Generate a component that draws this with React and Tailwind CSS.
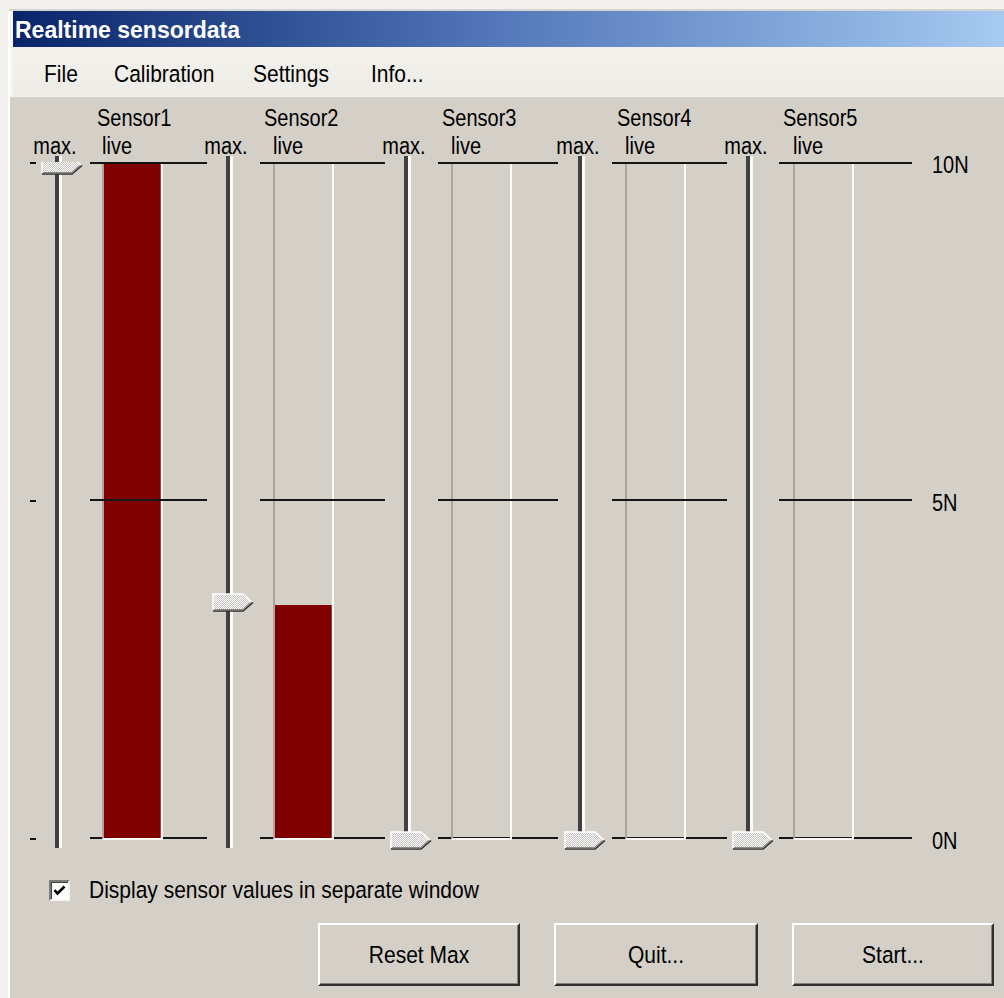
import React, { Fragment, useId } from 'react';

// live reading and stored maximum per channel, in newton (scale 0..10N)
const SENSORS = [
  { name: 'Sensor1', live: 10, max: 10, col: 'w-[131px]', line: 'left-[12px] w-[117px]', label: 'pl-[19px]' },
  { name: 'Sensor2', live: 3.45, max: 3.53, col: 'w-[138px]', line: 'left-[11px] w-[125px]', label: 'pl-[15px]' },
  { name: 'Sensor3', live: 0, max: 0, col: 'w-[134px]', line: 'left-[11px] w-[120px]', label: 'pl-[15px]' },
  { name: 'Sensor4', live: 0, max: 0, col: 'w-[128px]', line: 'left-[11px] w-[115px]', label: 'pl-[16px]' },
  { name: 'Sensor5', live: 0, max: 0, col: 'w-[143px]', line: 'left-[10px] w-[133px]', label: 'pl-[14px]' },
];

const FULL_SCALE = 10;
const PLOT_H = 675;

const Txt = ({ children, className = '' }) => (
  <span className={`inline-block scale-y-[1.15] ${className}`}>{children}</span>
);

const Thumb = ({ top }) => {
  const id = useId();
  return (
    <svg className="absolute left-[3px]" style={{ top }} width="43" height="19" viewBox="0 0 43 19">
      <defs>
        <pattern id={id} width="2" height="2" patternUnits="userSpaceOnUse">
          <rect width="2" height="2" fill="#ffffff" />
          <rect width="1" height="1" fill="#c6c4c0" />
          <rect x="1" y="1" width="1" height="1" fill="#c6c4c0" />
        </pattern>
      </defs>
      <path d="M1 1 H31 L41 9.5 L31 18 H1 Z" fill={`url(#${id})`} />
      <path d="M1 17 V1 H31 L39.5 8.5" fill="none" stroke="#ffffff" strokeWidth="1.5" />
      <path d="M1 18 H31 L41 9.5" fill="none" stroke="#303030" strokeWidth="1.6" />
      <path d="M2 16.6 H30.4 L38.8 9.5" fill="none" stroke="#8a8884" strokeWidth="1.2" />
    </svg>
  );
};

const SliderColumn = ({ max }) => {
  const center = 1 + (1 - max / FULL_SCALE) * PLOT_H;
  return (
    <div className="w-[40px] flex flex-col">
      <div className="h-[35px]" />
      <div className="h-[30px] pt-[3px] leading-[22px] flex justify-center pr-[6px]">
        <Txt>max.</Txt>
      </div>
      <div className="relative z-10 h-[678px]">
        <div className="absolute -top-[6px] -bottom-[8px] left-[17px] w-[4px] bg-[#404040]" />
        <div className="absolute -top-[6px] -bottom-[8px] left-[21px] w-[3px] bg-[#fbfaf7]" />
        <div className="absolute top-0 -bottom-[14px] left-0 -right-[8px] overflow-hidden">
          <Thumb top={center - 7} />
        </div>
      </div>
    </div>
  );
};

const GraphColumn = ({ s }) => (
  <div className={`${s.col} flex flex-col`}>
    <div className={`h-[35px] pt-[10px] leading-[22px] ${s.label}`}>
      <Txt>{s.name}</Txt>
    </div>
    <div className="h-[30px] pt-[3px] leading-[22px] pl-[24px]">
      <Txt>live</Txt>
    </div>
    <div className="relative h-[678px]">
      <div className={`absolute top-[675px] h-[2px] bg-[#151515] ${s.line}`} />
      <div className="absolute top-[1px] bottom-0 left-[24px] w-[61px] border-l-2 border-l-[#a9a59d] border-r-2 border-r-[#fbfaf7] border-b-2 border-b-[#fbfaf7] flex flex-col justify-end">
        <div className="w-full bg-[#800000] border-r border-r-[#a83a3a]" style={{ height: `${(s.live / FULL_SCALE) * 100}%` }} />
      </div>
      <div className={`absolute top-0 h-[2px] bg-[#151515] ${s.line}`} />
      <div className={`absolute top-[337px] h-[2px] bg-[#151515] ${s.line}`} />
    </div>
  </div>
);

const WinButton = ({ children, className = '' }) => (
  <button className={`h-[63px] bg-[#d4d0c8] border-2 border-t-white border-l-white border-r-[#303030] border-b-[#303030] shadow-[inset_-1px_-1px_0_#85827c] text-[21px] text-black ${className}`}>
    <Txt>{children}</Txt>
  </button>
);

export default function App() {
  return (
    <div className="w-[1004px] h-[998px] bg-[#f2f1ee] pt-[9px] pl-[8px] overflow-hidden font-['Liberation_Sans',Arial,sans-serif] text-black">
      <div className="h-full flex flex-col border-t-2 border-t-[#d6d4cf] border-l-2 border-l-white">
        <div className="pl-[3px] bg-[#f7f6f3]">
          <div className="h-[36px] bg-linear-to-r from-[#0a246a] via-[#5679bb] to-[#a6caf0] flex items-center pl-[2px]">
            <span className="text-white font-bold text-[23px] leading-none scale-y-[1.08] inline-block">Realtime sensordata</span>
          </div>
          <div className="h-[50px] bg-linear-to-b from-[#f3f1ec] to-[#eeece6] flex items-center pl-[31px] pt-[4px] text-[21px] leading-[24px]">
            <div className="w-[70px]"><Txt>File</Txt></div>
            <div className="w-[139px]"><Txt>Calibration</Txt></div>
            <div className="w-[118px]"><Txt>Settings</Txt></div>
            <div><Txt>Info...</Txt></div>
          </div>
        </div>

        <div className="flex-1 bg-[#d4d0c8] text-[20px]">
          <div className="flex pl-[20px]">
            <div className="w-[8px] flex flex-col">
              <div className="h-[65px]" />
              <div className="h-[678px] flex flex-col justify-between">
                <div className="w-[6px] h-[2px] bg-[#151515]" />
                <div className="w-[6px] h-[2px] bg-[#151515]" />
                <div className="w-[6px] h-[2px] bg-[#151515]" />
              </div>
            </div>

            {SENSORS.map((s) => (
              <Fragment key={s.name}>
                <SliderColumn max={s.max} />
                <GraphColumn s={s} />
              </Fragment>
            ))}

            <div className="flex flex-col pl-[20px]">
              <div className="h-[65px]" />
              <div className="h-[700px] -mt-[9px] -mb-[13px] flex flex-col justify-between leading-[24px]">
                <Txt>10N</Txt>
                <Txt>5N</Txt>
                <Txt>0N</Txt>
              </div>
            </div>
          </div>

          <div className="mt-[38px] h-[24px] flex items-center pl-[39px] text-[21px]">
            <div className="w-[21px] h-[21px] bg-white border-2 border-t-[#7d7b76] border-l-[#7d7b76] border-r-[#f6f5f2] border-b-[#f6f5f2] shadow-[inset_1px_1px_0_#404040] flex items-center justify-center">
              <svg width="13" height="11" viewBox="0 0 13 11">
                <path d="M1.5 5 L4.5 8.5 L11.5 1.5" fill="none" stroke="#000" strokeWidth="2.6" />
              </svg>
            </div>
            <span className="ml-[19px]"><Txt>Display sensor values in separate window</Txt></span>
          </div>

          <div className="mt-[21px] flex justify-end gap-[34px] pr-[10px]">
            <WinButton className="w-[202px]">Reset Max</WinButton>
            <WinButton className="w-[204px]">Quit...</WinButton>
            <WinButton className="w-[202px]">Start...</WinButton>
          </div>
        </div>
      </div>
    </div>
  );
}
